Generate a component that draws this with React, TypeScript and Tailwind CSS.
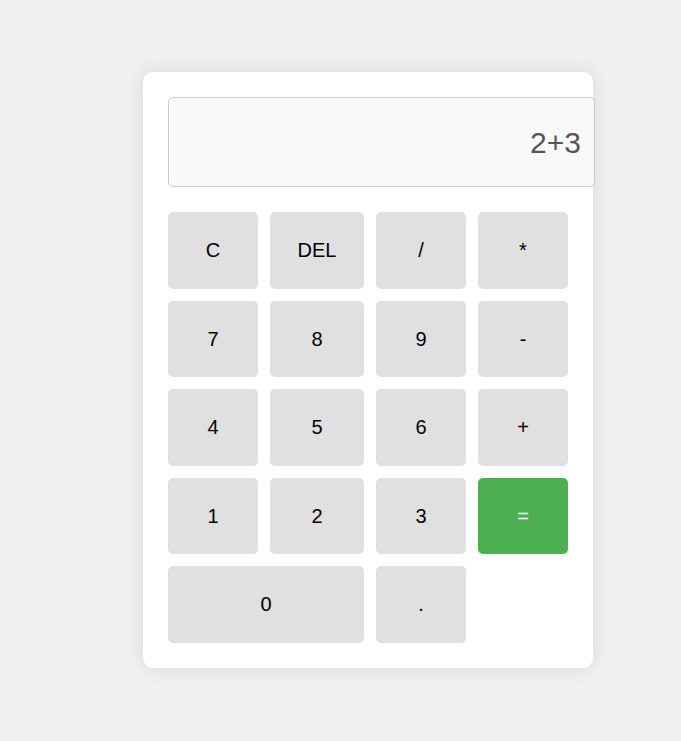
import React, { useState } from 'react';

const keys: { label: string; span?: boolean; primary?: boolean }[] = [
  { label: 'C' },
  { label: 'DEL' },
  { label: '/' },
  { label: '*' },
  { label: '7' },
  { label: '8' },
  { label: '9' },
  { label: '-' },
  { label: '4' },
  { label: '5' },
  { label: '6' },
  { label: '+' },
  { label: '1' },
  { label: '2' },
  { label: '3' },
  { label: '=', primary: true },
  { label: '0', span: true },
  { label: '.' },
];

export default function App() {
  const [value, setValue] = useState('2+3');

  const press = (k: string) => {
    if (k === 'C') return setValue('');
    if (k === 'DEL') return setValue(v => v.slice(0, -1));
    if (k === '=') {
      try {
        // eslint-disable-next-line no-new-func
        const res = Function(`return (${value})`)();
        setValue(String(res));
      } catch {
        setValue('Error');
      }
      return;
    }
    setValue(v => v + k);
  };

  return (
    <div className="min-h-screen bg-[#f0f0f0] flex items-start pt-[72px] pl-[143px] font-['Liberation_Sans',Arial,sans-serif]">
      <div className="w-[450px] bg-white rounded-[10px] p-[25px] shadow-[0_0_20px_rgba(0,0,0,0.1)]">
        <div className="w-[427px] h-[90px] mb-[25px] bg-[#f9f9f9] border border-[#ccc] rounded-[5px] flex items-center justify-end pr-[13px] text-[30px] text-[#555]">
          {value}
        </div>
        <div className="grid grid-cols-[90px_94px_90px_90px] gap-3">
          {keys.map(k => (
            <button
              key={k.label}
              onClick={() => press(k.label)}
              className={
                'h-[76.5px] rounded-[5px] text-[20px] ' +
                (k.span ? 'col-span-2 ' : '') +
                (k.primary ? 'bg-[#4caf50] text-white' : 'bg-[#e0e0e0] text-black')
              }
            >
              {k.label}
            </button>
          ))}
        </div>
      </div>
    </div>
  );
}
